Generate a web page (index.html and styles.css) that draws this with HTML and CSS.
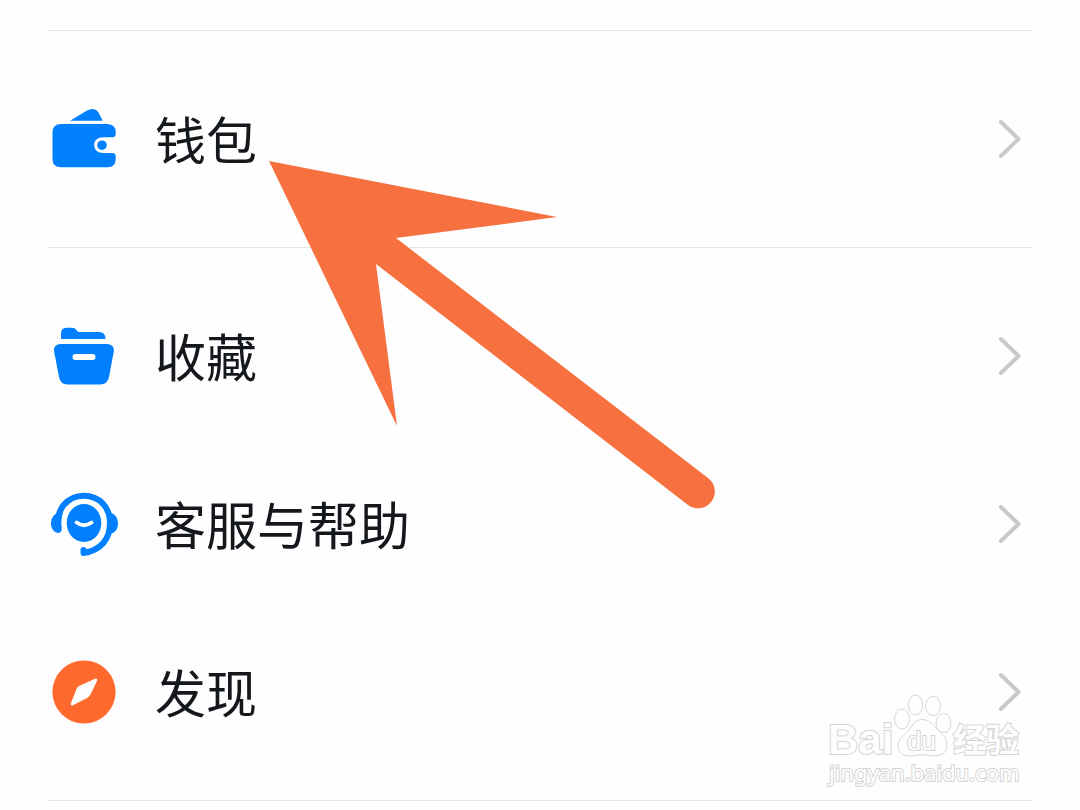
FILE: index.html
```html
<!DOCTYPE html>
<html lang="zh-CN">
<head>
<meta charset="utf-8">
<meta name="viewport" content="width=device-width, initial-scale=1">
<title>钱包</title>
<link rel="stylesheet" href="styles.css">
</head>
<body>
<main class="screen">
  <nav class="menu">
    <div class="group">
      <a class="row" href="#wallet">
        <svg class="icon" viewBox="0 0 72 72" aria-hidden="true">
          <path fill="#0080ff" d="M22 17.700L39 7.500Q46.500 3.500 50.500 9.500L54.700 17.700Z"/>
          <path fill="#0080ff" d="M13 21H59.500Q67.700 21.500 67.700 29V31Q67.700 34.300 64 34.300H55.500C49.500 34.300 46.200 37.500 46.200 42C46.200 46.500 49.500 50 55.500 50H64Q67.700 50 67.700 53V56Q67.700 64.300 59.500 64.300H13Q4.500 64.300 4.500 56V29.500Q4.500 21 13 21Z"/>
          <circle cx="54" cy="42.200" r="4.800" fill="#0080ff"/>
        </svg>
        <span class="label">钱包</span>
        <svg class="chevron" viewBox="0 0 24 40" aria-hidden="true"><path d="M3 3L20.500 20L3 37"/></svg>
      </a>
    </div>
    <div class="group">
      <a class="row" href="#favorites">
        <svg class="icon" viewBox="0 0 72 72" aria-hidden="true">
          <path fill="#0080ff" d="M13 19V14Q13 7.800 18.500 7.800H24Q27 7.800 28.500 10L30 12H51Q57.500 12 57.500 19Z"/>
          <path fill="#0080ff" d="M12 24H59.500Q66.800 24.500 65.700 32L61 57Q59.500 64.500 52 64.500H19.500Q12.500 64.500 11 57L6.200 32Q5 24.500 12 24Z"/>
          <path d="M27.500 37H44.500" stroke="#fefefe" stroke-width="6" stroke-linecap="round"/>
        </svg>
        <span class="label">收藏</span>
        <svg class="chevron" viewBox="0 0 24 40" aria-hidden="true"><path d="M3 3L20.500 20L3 37"/></svg>
      </a>
      <a class="row" href="#help">
        <svg class="icon" viewBox="0 0 72 72" aria-hidden="true">
          <path fill="none" stroke="#0080ff" stroke-width="6" stroke-linecap="round" stroke-linejoin="round" d="M10.500 41C7 22 19 7.700 36 7.700C51 7.700 62 19 62 35C62 51 53 62.500 35.500 65V62"/>
          <path fill="#0080ff" d="M12 25C6 25 3 30 3 35.500C3 41 6.500 45 11 45Q14 44 13.600 39.500C13 33 13.500 29 15 25ZM59 25H63C67 26 70 30 70 35.500C70 41 67 45 63 45.500L59 46Z"/>
          <ellipse cx="36" cy="35" rx="17.300" ry="19" fill="#0080ff"/>
          <path d="M28.700 34.500Q36 40 43.500 34.500" fill="none" stroke="#fefefe" stroke-width="4" stroke-linecap="round"/>
        </svg>
        <span class="label">客服与帮助</span>
        <svg class="chevron" viewBox="0 0 24 40" aria-hidden="true"><path d="M3 3L20.500 20L3 37"/></svg>
      </a>
      <a class="row" href="#discover">
        <svg class="icon" viewBox="0 0 72 72" aria-hidden="true">
          <circle cx="36" cy="36" r="31.600" fill="#ff692e"/>
          <path fill="#fefefe" d="M31 30L47 22.700Q50 21.800 49 25L42.500 38.500Q41 41 38 42.500L25 49.300Q22 50 23 47L28.500 33Q29.300 31 31 30Z"/>
        </svg>
        <span class="label">发现</span>
        <svg class="chevron" viewBox="0 0 24 40" aria-hidden="true"><path d="M3 3L20.500 20L3 37"/></svg>
      </a>
    </div>
  </nav>
  <svg class="pointer" viewBox="0 0 448 350" aria-hidden="true">
    <path fill="#f67040" d="M1 0L289 56L128 77L440 317A16.500 16.500 0 0 1 420 344L108 103L129 265Z"/>
  </svg>
  <svg class="watermark" viewBox="0 0 200 100" role="img" aria-label="Baidu 经验 jingyan.baidu.com">
    <g class="outline">
      <ellipse cx="76" cy="29" rx="7.500" ry="10"/>
      <ellipse cx="89.500" cy="15" rx="7.200" ry="10"/>
      <ellipse cx="107" cy="16" rx="7.500" ry="9.500"/>
      <ellipse cx="117.500" cy="33" rx="7.500" ry="9.500"/>
      <path d="M96 29.500C104 29.500 108 36 112 40C117 45 121 48 121 56C121 65 111 67 103 65.500C98 64.500 94 64.500 89 65.500C80 67 72 65 72 56C72 48 79 45 83 40C87 34 90 29.500 96 29.500Z"/>
    </g>
    <text class="mark mark-brand" x="2" y="64">Bai</text>
    <text class="mark mark-du" x="81" y="60">du</text>
    <text class="mark mark-cn" x="127" y="62">经验</text>
    <text class="mark mark-url" x="3" y="91">jingyan.baidu.com</text>
  </svg>
</main>
</body>
</html>
```
FILE: styles.css
```css
* {
  box-sizing: border-box;
}

body {
  margin: 0;
  background: #fefefe;
  color: #14181c;
  font-family: "Noto Sans CJK SC", sans-serif;
}

.screen {
  position: relative;
  padding: 30px 48px 8px;
}

.group {
  border-top: 1px solid #e6e6e6;
  padding: 24px 0;
}

.group:last-child {
  border-bottom: 1px solid #e6e6e6;
}

.row {
  display: flex;
  align-items: center;
  height: 168px;
  padding-right: 10px;
  color: inherit;
  text-decoration: none;
}

.icon {
  flex: none;
  width: 72px;
  height: 72px;
  margin-right: 35px;
}

.label {
  flex: 1;
  padding-bottom: 2px;
  font-size: 51px;
  line-height: 72px;
}

.chevron {
  flex: none;
  width: 24px;
  height: 40px;
  fill: none;
  stroke: #cacaca;
  stroke-width: 4;
  stroke-linecap: round;
  stroke-linejoin: round;
}

.pointer {
  position: absolute;
  left: 268px;
  top: 161px;
  width: 448px;
  height: 350px;
  pointer-events: none;
}

.watermark {
  position: absolute;
  right: 54px;
  top: 690px;
  width: 200px;
  height: 100px;
  pointer-events: none;
}

.outline {
  fill: #fefefe;
  stroke: #d6d6d6;
  stroke-width: 1;
}

.mark {
  fill: #fefefe;
  stroke: #d4d4d4;
  stroke-width: 2;
  paint-order: stroke;
  font-family: "Liberation Sans", sans-serif;
  font-weight: 700;
}

.mark-brand {
  font-size: 42px;
}

.mark-du {
  font-size: 26px;
  font-weight: 400;
}

.mark-cn {
  font-family: "Noto Sans CJK SC", sans-serif;
  font-size: 33px;
}

.mark-url {
  font-family: "Noto Sans", sans-serif;
  font-size: 22px;
  font-weight: 400;
}
```
